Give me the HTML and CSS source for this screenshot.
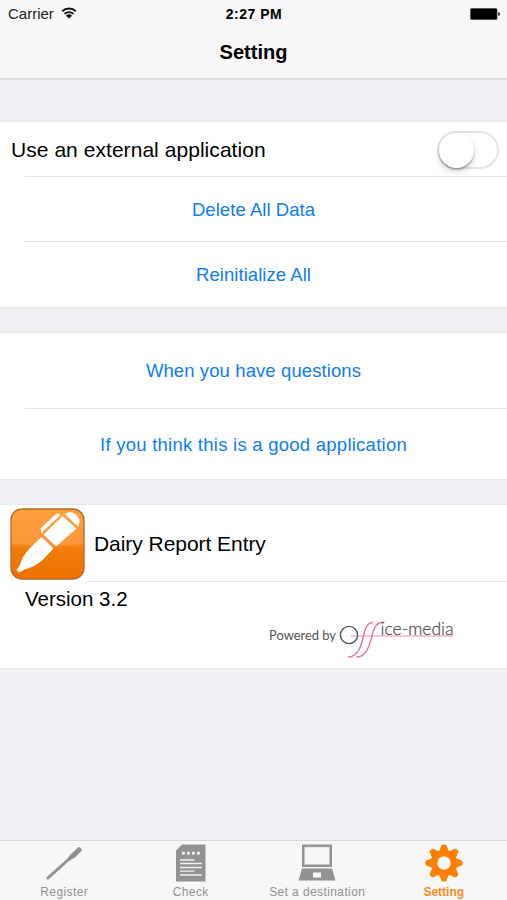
FILE: index.html
```html
<!DOCTYPE html>
<html lang="en">
<head>
  <meta charset="UTF-8" />
  <meta name="viewport" content="width=device-width, initial-scale=1.0" />
  <title>Setting</title>
  <link rel="stylesheet" href="styles.css">
</head>
<body>

  <div class="app">

    <header class="header">
      <div class="status">
        <div class="carrier">
          <span>Carrier</span>
          <svg width="16" height="12" viewBox="0 0 16 12">
            <path d="M1.2 4.2a9.8 9.8 0 0 1 13.6 0M3.5 6.9a6.5 6.5 0 0 1 9 0" fill="none" stroke="#111" stroke-width="1.9" />
            <path d="M8 11.5L5 8.7a4.4 4.4 0 0 1 6 0z" fill="#111" />
          </svg>
        </div>
        <div class="clock">2:27 PM</div>
        <div class="battery">
          <svg width="30" height="12" viewBox="0 0 30 12">
            <rect x="0" y="0" width="27.5" height="12" rx="1.5" fill="#777" />
            <rect x="0.7" y="0.7" width="26.1" height="10.6" rx="1" fill="#000" />
            <path d="M28.2 4Q30 4.5 30 6T28.2 8z" fill="#222" />
          </svg>
        </div>
      </div>
      <h1>Setting</h1>
    </header>

    <main>
      <section class="group">
        <div class="row row-switch">
          <span>Use an external application</span>
          <div class="switch"><div class="knob"></div></div>
        </div>
        <div class="row row-delete"><a class="link">Delete All Data</a></div>
        <div class="row row-reset"><a class="link">Reinitialize All</a></div>
      </section>

      <section class="group">
        <div class="row row-help"><a class="link">When you have questions</a></div>
        <div class="row row-rate"><a class="link">If you think this is a good application</a></div>
      </section>

      <section class="group">
        <div class="row row-app">
          <svg width="75" height="72" viewBox="0 0 75 72">
            <defs>
              <linearGradient id="orange" x1="0" y1="0" x2="0" y2="1">
                <stop offset="0" stop-color="#ff962b" />
                <stop offset="0.49" stop-color="#fb902b" />
                <stop offset="0.56" stop-color="#f17c0a" />
                <stop offset="1" stop-color="#ed7100" />
              </linearGradient>
            </defs>
            <rect x="1" y="1" width="73" height="70" rx="11" fill="url(#orange)" stroke="#b96825" stroke-width="1.3" />
            <path d="M1.7 35Q37 42 73.3 35V13Q73 2 62 1.7H13Q2 2 1.7 13z" fill="#fff" fill-opacity=".08" />
            <g fill="#fff">
              <path d="M54.5 6Q58 3.5 62.5 4.5Q68 6.5 69.500 12Q70 15.500 68 18.500z" />
              <path d="M52.5 8L66.5 20.5L46 38.5L33.5 26.5z" />
              <path d="M31.500 29L43.500 40.500L33 51.500Q25 59 14.500 61.500L9 64.500L6.500 62L9.500 58L12 51Q15 45 20 40z" />
              <path d="M31 20L46.500 5.800Q49.500 5 50.500 7L34 22.500L32 25.500Q30 23 31 20z" />
            </g>
            <path d="M33 23.8L51 7.2" stroke="#f9a352" stroke-width=".8" />
            <path d="M18 52L32 37" stroke="#f39237" stroke-width=".8" stroke-opacity=".35" />
          </svg>
          <span>Dairy Report Entry</span>
        </div>
        <div class="row row-version">
          <span class="version">Version 3.2</span>
          <svg class="brand" width="190" height="52" viewBox="0 -8 190 52">
            <text x="0" y="20.5" class="brand-by" textLength="67" lengthAdjust="spacingAndGlyphs">Powered by</text>
            <circle cx="80" cy="16" r="8.6" fill="none" stroke="#555" stroke-width="1.4" />
            <g fill="none" stroke="#e86f9d" stroke-width="1.4">
              <path d="M79 38C89 38 92 27 94 19C96 9 98 4 104 3.5" />
              <path d="M87.5 38C97.5 38 100 27 102.5 19C105 8 107 3.5 115.5 3" />
              <path d="M82 17H184" stroke-width="1" stroke-opacity=".8" />
            </g>
            <text x="111.5" y="15.5" class="brand-name" textLength="73" lengthAdjust="spacingAndGlyphs">ice-media</text>
          </svg>
        </div>
      </section>
    </main>

    <nav class="tabs">
      <a class="tab">
        <svg width="38" height="38" viewBox="0 0 38 38">
          <path d="M1.2 33.5L22 15L25.5 10.5L33.5 3Q36 3 37 6.5L30 13.5L24.5 16.5L3.5 35.5Q1 36 1.2 33.5z" fill="#929292" />
          <path d="M24 14.5L31.5 8" stroke="#858585" stroke-width="1" />
        </svg>
        <span>Register</span>
      </a>
      <a class="tab">
        <svg width="30" height="38" viewBox="0 0 30 38">
          <path d="M6 .5H29.5V37.5H0V6.5z" fill="#929292" />
          <g fill="#f7f7f7">
            <rect x="6" y="7.8" width="2.8" height="2.8" />
            <rect x="11" y="7.8" width="2.8" height="2.8" />
            <rect x="16" y="7.8" width="2.8" height="2.8" />
            <rect x="21" y="7.8" width="2.8" height="2.8" />
          </g>
          <path d="M4 16H18.5M4 19.5H26M4 23.5H26M4 27.2H18.5M4 31H26" stroke="#f1f1f1" stroke-width="1.3" />
        </svg>
        <span>Check</span>
      </a>
      <a class="tab">
        <svg width="38" height="38" viewBox="0 0 38 38">
          <path d="M4 .5H34V23H4z" fill="#929292" />
          <path d="M6.5 3H31.5V20.5H6.5z" fill="#f7f7f7" stroke="#c5c5c5" stroke-width=".6" />
          <path d="M4 24.5H34L37.5 36.5H.5z" fill="#929292" />
          <rect x="15" y="28.5" width="8" height="5" fill="#f7f7f7" />
        </svg>
        <span>Set a destination</span>
      </a>
      <a class="tab active">
        <svg width="38" height="38" viewBox="0 0 38 38">
          <g fill="#ff8000">
            <circle cx="19" cy="19" r="13.3" />
            <g id="teeth">
              <path id="tooth" d="M14 8L16.5 1.3Q17 .4 19 .4T21.5 1.3L24 8z" />
              <use href="#tooth" transform="rotate(45 19 19)" />
              <use href="#tooth" transform="rotate(90 19 19)" />
              <use href="#tooth" transform="rotate(135 19 19)" />
            </g>
            <use href="#teeth" transform="rotate(180 19 19)" />
          </g>
          <circle cx="19" cy="19" r="6.7" fill="#f7f7f7" />
        </svg>
        <span>Setting</span>
      </a>
    </nav>

  </div>

</body>
</html>
```

FILE: styles.css
```css
* { box-sizing: border-box; }
body { margin: 0; font-family: "Liberation Sans", Arial, sans-serif; background: #efeff4; color: #000; }
svg { display: block; }
.app { height: 900px; display: flex; flex-direction: column; overflow: hidden; }

/* header */
.header { height: 80px; background: #f7f7f7; border-bottom: 2px solid #dfdfe1; }
.status { height: 28px; display: grid; grid-template-columns: 1fr auto 1fr; align-items: center; padding: 0 7px 0 8px; }
.carrier { display: flex; align-items: center; gap: 7px; margin-top: -1px; font-size: 15px; color: #222; }
.carrier svg { margin-top: -1px; }
.clock { font-size: 14px; font-weight: bold; letter-spacing: .5px; }
.battery { justify-self: end; margin-top: -1px; }
h1 { margin: 12px 0 0; font-size: 20px; line-height: 25px; text-align: center; }

/* grouped rows */
main { flex: 1; padding-top: 42px; }
.group { background: #fff; margin-bottom: 26px; box-shadow: 0 0 0 1px #e8e8eb; }
.row { position: relative; display: flex; align-items: center; justify-content: center; font-size: 21px; }
.row + .row::before { content: ""; position: absolute; top: 0; left: 25px; right: 0; height: 1px; background: #e5e5e7; }
.link { color: #0f7cf0; font-size: 18.5px; letter-spacing: .05px; }
.row-switch { height: 54px; justify-content: space-between; padding: 1px 8px 0 11px; letter-spacing: .05px; }
.row-delete { height: 65px; padding-top: 2px; }
.row-reset { height: 66px; padding-top: 2px; }
.row-help { height: 75px; }
.row-help .link { letter-spacing: .1px; }
.row-rate { height: 71px; padding-top: 2px; }
.row-rate .link { letter-spacing: .25px; }
.row-app { height: 76px; justify-content: flex-start; gap: 9px; padding: 2px 0 0 10px; }
.row-app span { letter-spacing: -.05px; }
.row-version { height: 87px; align-items: flex-start; justify-content: space-between; padding: 5px 48px 0 25px; }
.row + .row-version::before { left: 85px; }
.version { font-size: 20.5px; line-height: 25px; }
.brand { margin-top: 25px; }
.brand-by { font-family: Lato, "Liberation Sans", sans-serif; font-size: 12.5px; fill: #555; }
.brand-name { font-family: Lato, "Liberation Sans", sans-serif; font-size: 18px; font-weight: 300; fill: #555; stroke: #555; stroke-width: .3px; }

.switch { width: 62px; height: 38px; border: 2px solid #e5e5e5; border-radius: 19px; }
.knob { width: 35px; height: 35px; border-radius: 50%; background: #fff; box-shadow: 0 2px 2px rgba(0,0,0,.28), 0 4px 9px rgba(0,0,0,.12); }

/* tab bar */
.tabs { height: 60px; display: grid; grid-template-columns: repeat(4, 1fr); padding-left: 1px; background: #f7f7f7; border-top: 1px solid #d9d9dc; }
.tab { display: flex; flex-direction: column; align-items: center; padding-top: 3px; font-size: 12px; letter-spacing: .4px; color: #929292; white-space: nowrap; }
.tab span { margin-top: 3px; line-height: 14px; }
.tab.active { color: #ff8a1c; font-weight: bold; letter-spacing: 0; }
```
